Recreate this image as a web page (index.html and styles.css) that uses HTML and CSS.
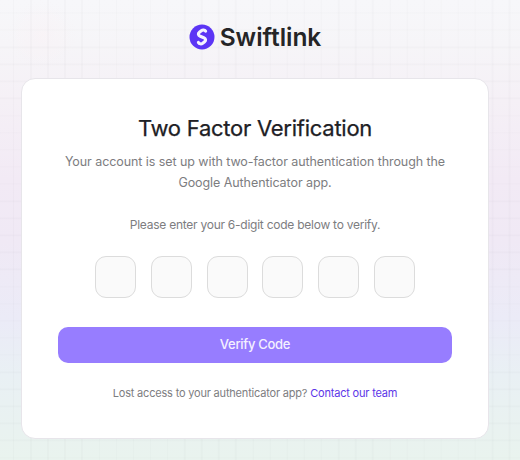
FILE: index.html
```html
<!DOCTYPE html>
<html lang="en">
<head>
<meta charset="utf-8">
<title>Swiftlink</title>
<link rel="stylesheet" href="styles.css">
</head>
<body>
<main class="page">
  <header class="brand">
    <svg class="brand-mark" viewBox="0 0 26 26" aria-hidden="true">
      <circle cx="13" cy="13" r="12.5" fill="#5c35f5"/>
      <path fill="none" stroke="#f5f3ff" stroke-width="3.1" stroke-linecap="round" stroke-linejoin="round" d="M16.6 7.2c-1-1.5-2.9-1.6-4.3-.5l-1.9 1.5c-1.7 1.4-1.2 3.4.8 4.1l3.6 1.4c2 .8 2.4 2.7.8 4l-1.9 1.5c-1.5 1.1-3.4.8-4.3-.8"/>
    </svg>
    <span class="brand-name">Swiftlink</span>
  </header>
  <section class="card">
    <h1 class="title">Two Factor Verification</h1>
    <p class="lead">Your account is set up with two-factor authentication through the<br>Google Authenticator app.</p>
    <p class="hint">Please enter your 6-digit code below to verify.</p>
    <form class="form">
      <div class="digits">
        <input class="digit" maxlength="1" aria-label="Digit 1">
        <input class="digit" maxlength="1" aria-label="Digit 2">
        <input class="digit" maxlength="1" aria-label="Digit 3">
        <input class="digit" maxlength="1" aria-label="Digit 4">
        <input class="digit" maxlength="1" aria-label="Digit 5">
        <input class="digit" maxlength="1" aria-label="Digit 6">
      </div>
      <button class="submit" type="button">Verify Code</button>
    </form>
    <p class="help">Lost access to your authenticator app? <a class="link" href="#">Contact our team</a></p>
  </section>
</main>
</body>
</html>
```
FILE: styles.css
```css
* { box-sizing: border-box; }

body {
  margin: 0;
  font-family: Inter, "Liberation Sans", sans-serif;
  color: #202024;
}

.page {
  height: 460px;
  overflow: hidden;
  display: flex;
  flex-direction: column;
  align-items: center;
  padding-right: 10px;
  background:
    repeating-linear-gradient(90deg, rgba(50, 50, 60, .018) 0 1.4px, transparent 1.4px 17.1px) 13px 0 / 598.5px 100%,
    repeating-linear-gradient(180deg, rgba(50, 50, 60, .018) 0 1.4px, transparent 1.4px 17.1px) 0 12.4px / 100% 513px,
    radial-gradient(circle at 42px 35px, rgba(255, 235, 240, .22), transparent 35px),
    linear-gradient(180deg, #f7f7fa 0, #f6f5f8 45px, #f5f0f6 100px, #f2eaf5 180px, #f0e9f5 240px, #ebebf7 320px, #e9f0f4 375px, #e9f2f0 430px, #e9f3ee 460px);
}

.brand {
  height: 78px;
  flex: none;
  display: flex;
  align-items: center;
  gap: 5px;
  padding-bottom: 4px;
}

.brand-mark { width: 26px; height: 26px; display: block; }

.brand-name {
  font-size: 24.5px;
  line-height: 30px;
  font-weight: 600;
  letter-spacing: -.05px;
  color: #252527;
}

.card {
  width: 468px;
  height: 361px;
  flex: none;
  padding: 34px 36px 0;
  border: 1px solid #e7e5ea;
  border-radius: 14px;
  background: #fff;
  text-align: center;
}

.title {
  margin: 0;
  font-size: 22px;
  line-height: 30px;
  font-weight: 400;
  letter-spacing: -.25px;
  -webkit-text-stroke: .25px #202024;
}

.lead, .hint, .help { margin: 0; color: #7d7d7f; }
.lead { margin-top: 8px; font-size: 12.5px; line-height: 21px; letter-spacing: -.07px; }
.hint { margin-top: 22px; font-size: 12px; line-height: 20px; letter-spacing: -.25px; }

.digits {
  display: flex;
  justify-content: space-between;
  width: 320px;
  margin: 21px auto 0;
}

.digit {
  width: 41px;
  height: 42px;
  padding: 0;
  border: 1px solid #dcdcdc;
  border-radius: 11px;
  background: #fafafa;
  font: 500 18px Inter, sans-serif;
  text-align: center;
}

.submit {
  display: block;
  width: 100%;
  height: 36px;
  margin-top: 29px;
  padding: 0 0 2px;
  border: 0;
  border-radius: 10px;
  background: #977dff;
  color: #f4f0ff;
  font: 500 13px Inter, sans-serif;
  letter-spacing: -.3px;
}

.help { margin-top: 20px; font-size: 11px; line-height: 20px; letter-spacing: -.19px; }
.link { color: #5c35e8; text-decoration: none; }
```
